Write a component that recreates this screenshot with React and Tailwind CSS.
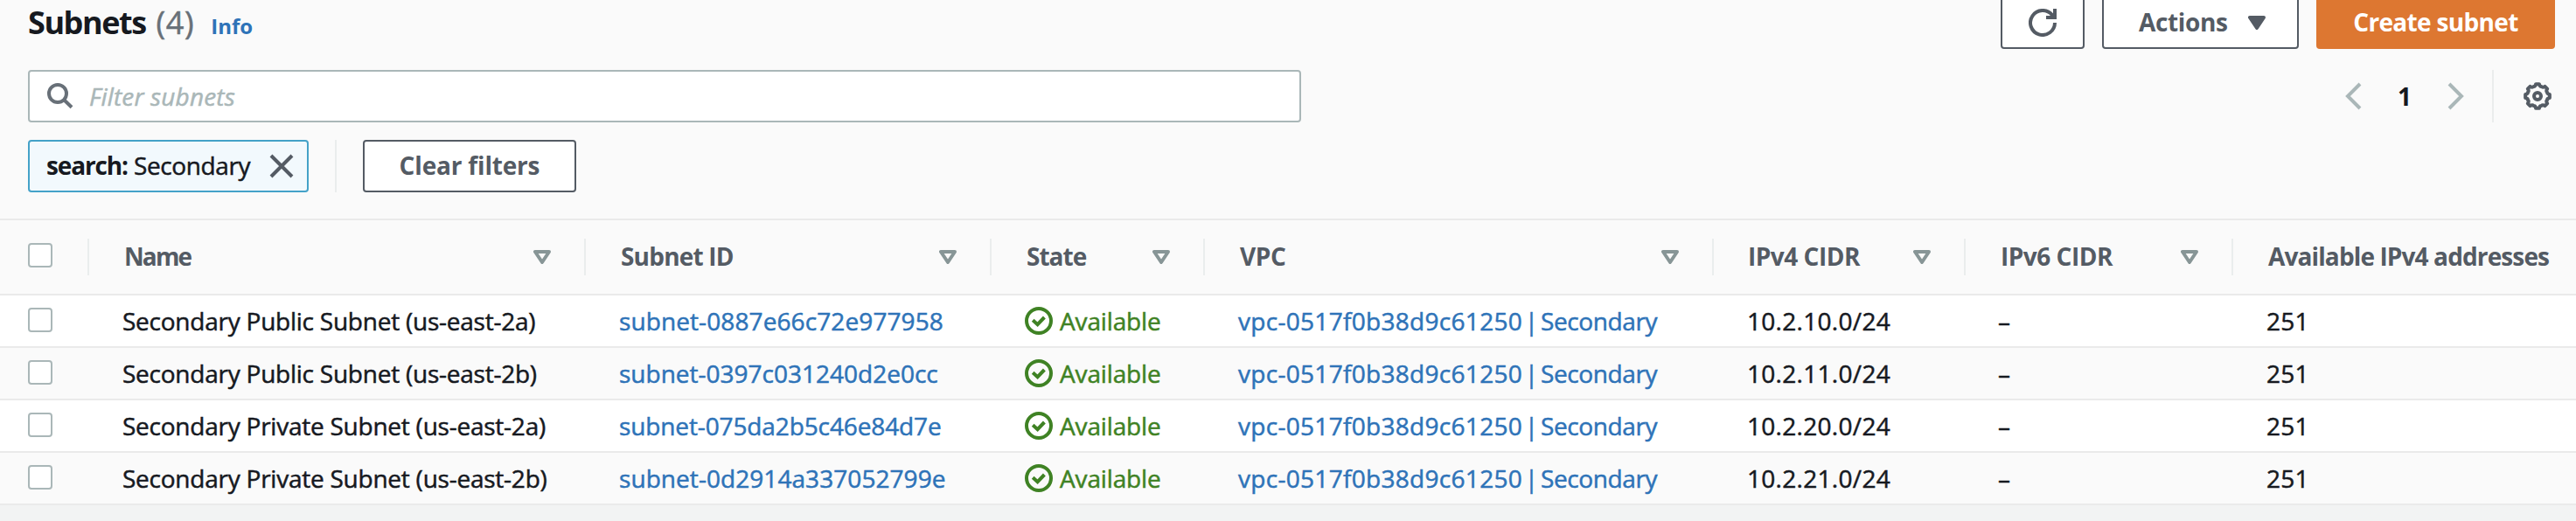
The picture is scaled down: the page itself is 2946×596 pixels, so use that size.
const COLS = "grid-cols-[102px_568px_464px_244px_582px_288px_306px_392px]";

const rows = [
  { name: "Secondary Public Subnet (us-east-2a)", id: "subnet-0887e66c72e977958", cidr: "10.2.10.0/24", idCls: "tracking-[0.1px]", bg: "bg-white" },
  { name: "Secondary Public Subnet (us-east-2b)", id: "subnet-0397c031240d2e0cc", cidr: "10.2.11.0/24", idCls: "tracking-[0px]", bg: "bg-[#fafafa]" },
  { name: "Secondary Private Subnet (us-east-2a)", id: "subnet-075da2b5c46e84d7e", cidr: "10.2.20.0/24", idCls: "tracking-[-0.12px]", bg: "bg-white" },
  { name: "Secondary Private Subnet (us-east-2b)", id: "subnet-0d2914a337052799e", cidr: "10.2.21.0/24", idCls: "tracking-[0.06px]", bg: "bg-[#fafafa]" },
];

const headers = [
  { label: "Name", cls: "pl-10 tracking-[-1.9px]" },
  { label: "Subnet ID", cls: "pl-10 tracking-[-0.8px]" },
  { label: "State", cls: "pl-10 tracking-[-1px]" },
  { label: "VPC", cls: "pl-10 tracking-[-0.4px]" },
  { label: "IPv4 CIDR", cls: "pl-[39px] tracking-[-0.5px]" },
  { label: "IPv6 CIDR", cls: "pl-10 tracking-[-0.5px]" },
];

// Eight-toothed outline with rounded valleys, centred on (16, 16).
const point = (deg, r) => {
  const a = (deg * Math.PI) / 180;
  return `${(16 + r * Math.cos(a)).toFixed(2)} ${(16 + r * Math.sin(a)).toFixed(2)}`;
};
const gearPath =
  Array.from({ length: 8 }, (_, i) => {
    const d = i * 45;
    return `${i === 0 ? "M" : "L"}${point(d - 8, 14)}L${point(d + 8, 14)}Q${point(d + 13, 11.2)} ${point(d + 22.5, 11.9)}Q${point(d + 32, 11.2)} ${point(d + 37, 14)}`;
  }).join("") + "Z";

function Checkbox() {
  return <span className="block size-7 rounded-[4px] border-2 border-[#aab7b8] bg-white" />;
}

function SortIcon() {
  return (
    <svg className="h-4 w-5" viewBox="0 0 20 16">
      <path d="M2 2h16l-8 12z" fill="none" stroke="#879596" strokeWidth="4" strokeLinejoin="round" />
    </svg>
  );
}

function StatusIcon() {
  return (
    <svg className="size-8" viewBox="0 0 32 32" fill="none" stroke="#3f8224" strokeWidth="4">
      <circle cx="16" cy="16" r="14" />
      <path d="M9.2 15.2l5.4 5L22.4 12" />
    </svg>
  );
}

function Chevron({ d }) {
  return (
    <svg className="h-8 w-5" viewBox="0 0 20 32">
      <path d={d} fill="none" stroke="#aab7b8" strokeWidth="4" />
    </svg>
  );
}

export default function App() {
  return (
    <div className="flex h-[596px] w-[2946px] flex-col overflow-hidden bg-[#f2f3f3] font-['Open_Sans','Noto_Sans',sans-serif] text-[28px] leading-[38px] whitespace-nowrap text-[#16191f]">
      <div className="h-[250px] shrink-0 bg-[#fafafa] pr-6 pl-8">
        <div className="flex h-14 items-end justify-between">
          <div className="flex h-full items-baseline">
            <h1 className="text-[36px] leading-[52px] font-bold tracking-[-1.45px]">Subnets</h1>
            <span className="ml-[12px] text-[36px] leading-[52px] tracking-[0.6px] text-[#687078] [-webkit-text-stroke:0.5px]">(4)</span>
            <a className="ml-[19px] text-[24px] font-bold text-[#2e73b8]">Info</a>
          </div>
          <div className="flex gap-5 font-bold text-[#545b64]">
            <button className="flex h-[60px] w-24 items-center justify-center rounded-[4px] border-2 border-[#545b64] bg-white">
              <svg className="size-8" viewBox="0 0 32 32" fill="none" stroke="#545b64" strokeWidth="4">
                <path d="M30 16A14 14 0 1 1 27 7.3" />
                <path d="M20 10h10V0" />
                <path d="M23 10l5-5v5z" fill="#545b64" stroke="none" />
              </svg>
            </button>
            <button className="flex h-[60px] w-[225px] items-center rounded-[4px] border-2 border-[#545b64] bg-white pl-10">
              <span className="w-[125px] pb-0.5 text-left tracking-[-0.37px]">Actions</span>
              <svg className="h-4 w-5" viewBox="0 0 20 16">
                <path d="M2 2h16l-8 12z" fill="#545b64" stroke="#545b64" strokeWidth="4" strokeLinejoin="round" />
              </svg>
            </button>
            <button className="flex h-[60px] w-[273px] items-center justify-center rounded-[4px] bg-[#dd7731] pb-0.5 tracking-[-0.67px] text-white">
              Create subnet
            </button>
          </div>
        </div>

        <div className="mt-6 flex h-[60px] items-center justify-between">
          <div className="flex h-[60px] w-[1456px] items-center rounded-[4px] border-2 border-[#aab7b8] bg-white pl-5">
            <svg className="size-[30px]" viewBox="0 0 30 30" fill="none" stroke="#687078" strokeWidth="4">
              <circle cx="12" cy="12" r="10" />
              <path d="M19 19l9 8.8" />
            </svg>
            <span className="ml-[18px] tracking-[0.15px] text-[#aab7b8] italic [-webkit-text-stroke:0.5px]">Filter subnets</span>
          </div>
          <div className="flex h-[60px] items-center pr-1">
            <Chevron d="M18 2L4 16L18 30" />
            <span className="w-[98px] text-center font-bold">1</span>
            <Chevron d="M2 2L16 16L2 30" />
            <span className="ml-[31px] h-[60px] w-0.5 bg-[#eaeded]" />
            <svg className="ml-[34px] size-8" viewBox="0 0 32 32" fill="none" stroke="#545b64" strokeWidth="4">
              <path d={gearPath} strokeLinejoin="round" />
              <circle cx="16" cy="16" r="4" />
            </svg>
          </div>
        </div>

        <div className="mt-5 flex h-[60px] items-center">
          <div className="flex h-[60px] w-[321px] items-center rounded-[4px] border-2 border-[#44a2c8] bg-[#f2f9fd] pl-[19px]">
            <span className="w-[100px] pb-0.5 font-bold tracking-[-1.15px]">search:</span>
            <span className="w-[155px] pb-0.5 tracking-[-0.4px] [-webkit-text-stroke:0.5px]">Secondary</span>
            <svg className="size-[28px]" viewBox="0 0 28 28">
              <path d="M2 2l24 24M26 2L2 26" stroke="#545b64" strokeWidth="4" />
            </svg>
          </div>
          <span className="ml-[30px] h-[60px] w-0.5 bg-[#eaeded]" />
          <button className="ml-[30px] flex h-[60px] w-[244px] items-center justify-center rounded-[4px] border-2 border-[#545b64] bg-white pb-0.5 font-bold tracking-[-0.18px] text-[#545b64]">
            Clear filters
          </button>
        </div>
      </div>

      <div className={`grid h-[88px] shrink-0 items-center border-y-2 border-[#eaeaea] bg-[#fafafa] font-bold text-[#545b64] ${COLS}`}>
        <div className="flex h-[42px] items-center border-r-2 border-[#eaeded] pb-1 pl-8">
          <Checkbox />
        </div>
        {headers.map((h) => (
          <div key={h.label} className={`flex h-[42px] items-center justify-between border-r-2 border-[#eaeded] pr-[38px] ${h.cls}`}>
            <span className="pb-0.5">{h.label}</span>
            <SortIcon />
          </div>
        ))}
        <div className="pb-0.5 pl-10 tracking-[-0.88px]">Available IPv4 addresses</div>
      </div>

      {rows.map((r) => (
        <div key={r.id} className={`grid h-[60px] shrink-0 items-center border-b-2 border-[#eaeaea] [-webkit-text-stroke:0.5px] ${r.bg} ${COLS}`}>
          <div className="pb-0.5 pl-8">
            <Checkbox />
          </div>
          <div className="pl-[38px] tracking-[-0.24px]">{r.name}</div>
          <div className={`pl-[38px] text-[#2e73b8] ${r.idCls}`}>{r.id}</div>
          <div className="flex items-center pl-[38px] text-[#3f8224]">
            <StatusIcon />
            <span className="ml-2 tracking-[-0.14px]">Available</span>
          </div>
          <div className="flex pl-[38px] text-[#2e73b8]">
            <span className="w-[325px] tracking-[0.3px]">vpc-0517f0b38d9c61250</span>
            <span className="flex w-[21px] justify-center">|</span>
            <span className="tracking-[-0.4px]">Secondary</span>
          </div>
          <div className="pl-[38px] tracking-[0.3px]">{r.cidr}</div>
          <div className="pl-[37px]">–</div>
          <div className="pl-[38px] tracking-[0.2px]">251</div>
        </div>
      ))}
    </div>
  );
}
